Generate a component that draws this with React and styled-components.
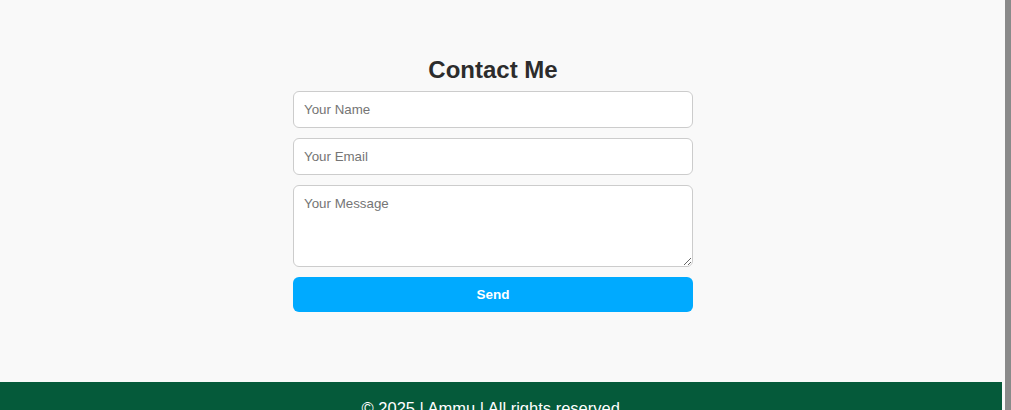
import React from "react";
import styled, { createGlobalStyle } from "styled-components";

const GlobalStyle = createGlobalStyle`
  html::-webkit-scrollbar {
    width: 0;
  }
  body {
    margin: 0;
    padding-right: 9px;
    background: #f9f9f9;
    font-family: "Liberation Sans", Arial, sans-serif;
    color: #2c2c2c;
  }
`;

const ScrollStrip = styled.div`
  position: fixed;
  top: 0;
  right: 0;
  bottom: 0;
  width: 9px;
  background: linear-gradient(to right, #f9f9f9 3px, #8a8a8a 3px);
  z-index: 10;
`;

const Page = styled.div`
  display: flex;
  flex-direction: column;
  min-height: 100vh;
`;

const Section = styled.section`
  display: flex;
  flex-direction: column;
  align-items: center;
  padding: 56px 16px 70px 0;
`;

const Title = styled.h2`
  margin: 0 0 7px;
  font-size: 24px;
  font-weight: 700;
  color: #2c2c2c;
`;

const Form = styled.form`
  width: 400px;
  display: flex;
  flex-direction: column;
  gap: 10px;
`;

const fieldCss = `
  box-sizing: border-box;
  width: 100%;
  padding: 10px;
  border: 1px solid #cccccc;
  border-radius: 6px;
  background: #ffffff;
  font-family: "Liberation Sans", Arial, sans-serif;
  font-size: 13.333px;
  line-height: 15px;
  color: #333;
  outline: none;
  &::placeholder {
    color: #757575;
  }
`;

const Input = styled.input`
  ${fieldCss}
  height: 37px;
`;

const TextArea = styled.textarea`
  ${fieldCss}
  height: 82px;
  display: block;
  resize: vertical;
`;

const Button = styled.button`
  height: 35px;
  border: none;
  border-radius: 6px;
  background: #00aaff;
  color: #ffffff;
  font-family: "Liberation Sans", Arial, sans-serif;
  font-size: 13.5px;
  font-weight: 700;
  cursor: pointer;
`;

const Footer = styled.footer`
  background: #055a3a;
  color: #ffffff;
  text-align: center;
  padding: 17px 16px 17px 0;
  font-size: 16.5px;
  line-height: 18px;
`;

export default function App() {
  return (
    <Page>
      <GlobalStyle />
      <ScrollStrip />
      <Section>
        <Title>Contact Me</Title>
        <Form onSubmit={(e) => e.preventDefault()}>
          <Input type="text" placeholder="Your Name" />
          <Input type="email" placeholder="Your Email" />
          <TextArea placeholder="Your Message" />
          <Button type="submit">Send</Button>
        </Form>
      </Section>
      <Footer>© 2025 | Ammu | All rights reserved.</Footer>
    </Page>
  );
}
